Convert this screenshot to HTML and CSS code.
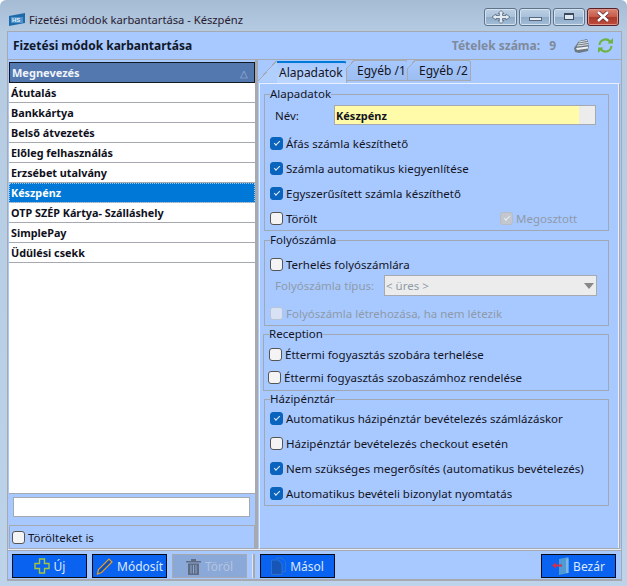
FILE: index.html
```html
<!DOCTYPE html>
<html lang="hu">
<head>
  <meta charset="UTF-8">
  <title>Fizetési módok karbantartása - Készpénz</title>
  <link rel="stylesheet" href="styles.css">
</head>
<body>
  <div class="window">
    <div class="titlebar">
      <svg class="app-icon" width="16" height="13" viewBox="0 0 16 13"><path d="M0 3 L16 0 V10 L0 13 Z" fill="#1f6aa8"/><rect x="2" y="4" width="12" height="6" fill="#4f93cc"/><text x="3" y="9" font-size="6" font-weight="bold" fill="#e6f0fa" font-family="Liberation Sans">HS</text></svg>
      <span class="title-text">Fizetési módok karbantartása - Készpénz</span>
      <div class="win-buttons">
        <div class="win-btn btn-move"><svg width="20" height="14" viewBox="0 0 20 14"><path d="M10 .5 L13 3.5 H11.5 V5.5 H15 V4 L19 7 L15 10 V8.5 H11.5 V10.5 H13 L10 13.5 L7 10.5 H8.500 V8.500 H5 V10 L1 7 L5 4 V5.500 H8.500 V3.500 H7 Z" fill="#e4ebf2" stroke="#56687e" stroke-width=".8"/></svg></div>
        <div class="win-btn btn-min"><span class="min-mark"></span></div>
        <div class="win-btn btn-max"><span class="max-mark"></span></div>
        <div class="win-btn btn-close"><svg width="16" height="11" viewBox="0 0 16 11"><path d="M3 1 L13 10 M13 1 L3 10" stroke="#5a2830" stroke-width="4"/><path d="M3 1 L13 10 M13 1 L3 10" stroke="#fff" stroke-width="2.6"/></svg></div>
      </div>
    </div>
    <div class="client">
      <div class="header">
        <span class="header-title">Fizetési módok karbantartása</span>
        <span class="item-count">Tételek száma:</span>
        <span class="item-count count-value">9</span>
        <svg class="print-icon" width="17" height="14" viewBox="0 0 17 14"><path d="M1 9 L6 2 L14 0 L16 6 L15 12 L6 14 L2 13 Z" fill="#6d7a84"/><path d="M6 3 L14 1.500 M5 5 L15 3.500 M4 7 L15.500 5.500" stroke="#dfe4e8"/><path d="M3 9 L15 7.500 V9.500 L4 11 Z" fill="#eef1f3"/></svg>
        <svg class="sync-icon" width="17" height="17" viewBox="0 0 17 17"><path d="M2.500 8 A6 6 0 0 1 13 4.500 M14.500 9 A6 6 0 0 1 4 12.500" fill="none" stroke="#6cb33f" stroke-width="2"/><path d="M10.500 6.500 H16 V1 Z M6.500 10.500 H1 V16 Z" fill="#6cb33f"/></svg>
      </div>
      <div class="main">
        <div class="left-panel">
          <div class="list">
            <div class="list-head"><span>Megnevezés</span><span class="sort-mark">△</span></div>
            <div class="list-row">Átutalás</div>
            <div class="list-row">Bankkártya</div>
            <div class="list-row">Belső átvezetés</div>
            <div class="list-row">Előleg felhasználás</div>
            <div class="list-row">Erzsébet utalvány</div>
            <div class="list-row selected">Készpénz</div>
            <div class="list-row">OTP SZÉP Kártya- Szálláshely</div>
            <div class="list-row">SimplePay</div>
            <div class="list-row">Üdülési csekk</div>
          </div>
          <div class="search-row"><div class="search-box"></div></div>
          <div class="deleted-row">
            <label class="check"><span class="box"></span>Törölteket is</label>
          </div>
        </div>
        <div class="right-panel">
          <div class="tabs">
            <div class="tab active">Alapadatok</div>
            <div class="tab tab-second">Egyéb /1</div>
            <div class="tab tab-third">Egyéb /2</div>
          </div>
          <div class="tab-body">
            <fieldset class="group group-base">
              <legend>Alapadatok</legend>
              <div class="name-row">
                <span class="name-label">Név:</span>
                <div class="name-input"><span>Készpénz</span><span class="name-btn"></span></div>
              </div>
              <label class="check row"><span class="box on"></span>Áfás számla készíthető</label>
              <label class="check row"><span class="box on"></span>Számla automatikus kiegyenlítése</label>
              <label class="check row"><span class="box on"></span>Egyszerűsített számla készíthető</label>
              <div class="split-row">
                <label class="check deleted-check"><span class="box"></span>Törölt</label>
                <label class="check muted"><span class="box grey-on"></span>Megosztott</label>
              </div>
            </fieldset>
            <fieldset class="group group-account">
              <legend>Folyószámla</legend>
              <label class="check row"><span class="box"></span>Terhelés folyószámlára</label>
              <div class="type-row">
                <span class="muted type-label">Folyószámla típus:</span>
                <div class="select"><span>&lt; üres &gt;</span><span class="arrow"></span></div>
              </div>
              <label class="check row muted"><span class="box faded"></span>Folyószámla létrehozása, ha nem létezik</label>
            </fieldset>
            <fieldset class="group group-reception">
              <legend>Reception</legend>
              <label class="check row"><span class="box"></span>Éttermi fogyasztás szobára terhelése</label>
              <label class="check row shifted"><span class="box"></span>Éttermi fogyasztás szobaszámhoz rendelése</label>
            </fieldset>
            <fieldset class="group group-cash">
              <legend>Házipénztár</legend>
              <label class="check row"><span class="box on"></span>Automatikus házipénztár bevételezés számlázáskor</label>
              <label class="check row"><span class="box"></span>Házipénztár bevételezés checkout esetén</label>
              <label class="check row"><span class="box on"></span>Nem szükséges megerősítés (automatikus bevételezés)</label>
              <label class="check row"><span class="box on"></span>Automatikus bevételi bizonylat nyomtatás</label>
            </fieldset>
          </div>
        </div>
      </div>
      <div class="footer">
        <button class="btn">
          <svg width="16" height="16" viewBox="0 0 16 16"><path d="M5.500 1 H10.500 V5.500 H15 V10.500 H10.500 V15 H5.500 V10.500 H1 V5.500 H5.500 Z" fill="none" stroke="#a4c63c" stroke-width="1.400"/></svg>Új
        </button>
        <button class="btn">
          <svg width="17" height="17" viewBox="0 0 17 17"><path d="M1.500 16 L2.500 11.500 L13 1 L16 4 L5.500 14.500 Z" fill="#0a4fc0" stroke="#e8a020" stroke-width="1.200"/></svg>Módosít
        </button>
        <button class="btn disabled">
          <svg width="15" height="17" viewBox="0 0 15 17"><path d="M0 3 H15 V4.500 H0 Z M5 1 H10 V3 H5 Z M2 5.500 H13 V17 H2 Z" fill="#5f6b80"/><path d="M5 7 V15.500 M7.500 7 V15.500 M10 7 V15.500" stroke="#8aa8d8" stroke-width="1"/></svg>Töröl
        </button>
        <span class="sep"></span>
        <button class="btn">
          <svg width="15" height="18" viewBox="0 0 15 18"><path d="M5 1 H11 L14.500 4.500 V14.500 H11.500" fill="none" stroke="#2b72cf"/><path d="M.5 3 H7 L11 7 V17.500 H.5 Z" fill="#1656b8" stroke="#2b72cf"/></svg>Másol
        </button>
        <button class="btn btn-leave">
          <svg width="17" height="18" viewBox="0 0 17 18"><path d="M7 2 L16.500 0 V16 L7 18 Z" fill="#4f9ad4"/><path d="M14 1.500 H16.500 V16 H14 Z" fill="#7db8e4"/><path d="M3 8.500 H10" stroke="#d0304a" stroke-width="2"/><path d="M0 8.500 L4 5.500 V11.500 Z" fill="#d0304a"/></svg>Bezár
        </button>
      </div>
    </div>
  </div>
</body>
</html>
```

FILE: styles.css
```css
/* Ablak */
html, body {
  margin: 0;
  height: 586px;
  overflow: hidden;
  background: #fff;
}

body {
  font-family: "Noto Sans", "Open Sans", sans-serif;
  font-size: 11.5px;
  color: #14141e;
}

.window {
  width: 627px;
  height: 586px;
  box-sizing: border-box;
  padding: 0 5px 5px 7px;
  background: linear-gradient(to bottom, #a4bbd4 0, #b4cbe2 31px, #bdd3e9 100%);
  border-radius: 6px 6px 0 0;
  display: flex;
  flex-direction: column;
}

.titlebar {
  height: 31px;
  flex: none;
  display: flex;
  align-items: center;
  padding: 7px 0 0 2px;
  box-sizing: border-box;
}

.app-icon {
  margin-right: 4px;
}

.title-text {
  font-size: 11.2px;
  color: #2a1a30;
}

.win-buttons {
  margin-left: auto;
  display: flex;
  gap: 2px;
  margin-right: 3px;
  margin-top: -5px;
}

.win-btn {
  height: 16px;
  border: 1px solid #5d7389;
  border-radius: 3px;
  box-shadow: inset 0 0 0 1px #d4e2ef;
  background: linear-gradient(to bottom, #bcd0e4, #a8c1da 50%, #8eabc8 52%, #a4bed8);
  display: flex;
  align-items: center;
  justify-content: center;
}

.btn-move { width: 31px; }
.btn-min { width: 30px; }
.btn-max { width: 30px; }
.btn-close {
  width: 30px;
  border-color: #5a2028;
  box-shadow: inset 0 0 0 1px #dc9488;
  background: linear-gradient(to bottom, #d98474, #c65a48 50%, #a93a2a 52%, #c04c3c);
}

.min-mark {
  width: 11px;
  height: 2px;
  background: #e8eef5;
  border: 1px solid #56687e;
  margin-top: 4px;
}

.max-mark {
  width: 8px;
  height: 4px;
  border: 1px solid #3c4a5c;
  border-top-width: 2px;
  background: #dde8f2;
}

.client {
  flex: 1;
  background: #a8c9ff;
  border: 1px solid #a6aab0;
  border-bottom-width: 2px;
  display: flex;
  flex-direction: column;
  min-height: 0;
}

/* Fejléc */
.header {
  height: 27px;
  flex: none;
  display: flex;
  align-items: center;
  padding: 0 7px 0 5px;
  border-bottom: 1px solid #a6aab0;
}

.header-title {
  font-weight: bold;
  font-size: 12px;
  margin-right: auto;
  color: #101828;
}

.item-count {
  font-weight: bold;
  font-size: 12px;
  color: #7f8a9c;
}

.count-value {
  margin-left: 9px;
}

.print-icon {
  margin-left: 17px;
}

.sync-icon {
  margin-left: 7px;
}

/* Lista */
.main {
  flex: 1;
  display: flex;
  min-height: 0;
  gap: 1px;
}

.left-panel {
  width: 247px;
  flex: none;
  display: flex;
  flex-direction: column;
  padding-top: 2px;
  border-right: 3px solid #a6aab0;
}

.list {
  flex: 1;
  background: #fff;
  border-bottom: 1px solid #a6aab0;
  margin-left: 1px;
}

.list-head {
  height: 19px;
  background: #5378b0;
  border: 1px solid #101820;
  color: #f0f4fa;
  font-weight: bold;
  font-size: 11px;
  padding: 0 6px 0 2px;
  display: flex;
  justify-content: space-between;
  align-items: center;
}

.sort-mark {
  color: #a0b4d0;
  font-weight: normal;
  font-size: 10px;
}

.list-row {
  height: 19px;
  line-height: 19px;
  border-bottom: 1px solid #a6aab0;
  padding-left: 2px;
  font-weight: bold;
  font-size: 10.8px;
  color: #101020;
}

.list-row.selected {
  background: #0078d7;
  color: #fff;
  outline: 1px dotted #9cc8ee;
  outline-offset: -1px;
}

.search-row {
  height: 31px;
  padding: 3px 5px 0;
  box-sizing: border-box;
  flex: none;
}

.search-box {
  height: 18px;
  background: #fff;
  border: 1px solid #a6aab0;
}

.deleted-row {
  height: 22px;
  flex: none;
  border: 1px solid #a6aab0;
  display: flex;
  align-items: center;
  padding-left: 2px;
  margin: 0 0 0 1px;
}

/* Fülek */
.right-panel {
  flex: 1;
  display: flex;
  flex-direction: column;
  min-width: 0;
}

.tabs {
  height: 23px;
  flex: none;
  display: flex;
  align-items: flex-end;
  padding-left: 18px;
  font-size: 12px;
}

.tab {
  position: relative;
  height: 21px;
  line-height: 20px;
  margin-bottom: 2px;
  box-sizing: border-box;
  border: 1px solid #a6aab0;
  border-radius: 0 3px 0 0;
}

.tab::before {
  content: "";
  position: absolute;
  left: -1px;
  top: -1px;
  width: 9px;
  height: 10px;
  background: linear-gradient(to bottom right, #a8c9ff calc(50% - 1px), #a6aab0 calc(50% - 1px), #a6aab0 50%, transparent 50%);
}

.tab-second {
  width: 61px;
  padding-left: 10px;
  border-left: none;
  background: linear-gradient(to bottom, #a8c9ff, #9cbdf0);
}

.tab-third {
  width: 63px;
  padding-left: 11px;
  border-left: none;
  background: linear-gradient(to bottom, #a8c9ff, #9cbdf0);
}

.tab.active {
  width: 70px;
  height: 22px;
  margin-bottom: 0;
  padding-left: 2px;
  border: none;
  border-top: 2px solid #0078d7;
  border-right: 1px solid #a6aab0;
  background: linear-gradient(to bottom, #a8c9ff, #bcd6ff);
}

.tab.active::before {
  left: -19px;
  top: -2px;
  width: 19px;
  height: 21px;
  background: linear-gradient(to bottom right, transparent calc(50% - 1px), #a6aab0 calc(50% - 1px), #a6aab0 50%, #b0cffd 50%);
}

.tab-body {
  flex: 1;
  border: 1px solid #e8f0fc;
  border-right-color: #a6aab0;
  border-bottom-color: #a6aab0;
  box-shadow: inset -1px 0 0 #e8f0fc;
  padding: 3px 10px 0 4px;
  margin-right: 1px;
  display: flex;
  flex-direction: column;
}

.group {
  margin: 0;
  padding: 0 0 0 5px;
  border: 1px solid #a0a8b4;
  min-width: 0;
  box-sizing: border-box;
}

.group legend {
  padding: 0;
  line-height: 14px;
}

.group-base { height: 144px; }
.group-account { height: 93px; margin-top: 2px; }
.group-reception { height: 64px; margin: 1px 0 0 -1px; }
.group-cash { height: 114px; margin-top: 1px; }

.check {
  display: flex;
  align-items: center;
  gap: 3px;
}

.check.row {
  height: 25px;
}

.group-account .check.row { height: 22px; }
.group-account .check.row:first-of-type { margin-top: 6px; }
.group-account .type-row + .check.row { margin-top: 6px; }
.group-reception .check.row { height: 23px; }
.group-reception .check.row:first-of-type { margin-top: 2px; }
.check.shifted { margin-left: -1px; }

.box {
  width: 11px;
  height: 11px;
  flex: none;
  background: #f4f4f4;
  border: 1px solid #555;
  border-radius: 3px;
  display: flex;
  align-items: center;
  justify-content: center;
}

.box.on {
  background: #0a63bd;
  border-color: #0a63bd;
}

.box.on::after,
.box.grey-on::after {
  content: "";
  width: 5px;
  height: 2px;
  border-left: 1px solid #e8f2ff;
  border-bottom: 1px solid #e8f2ff;
  transform: rotate(-45deg);
  margin-top: -2px;
}

.box.grey-on {
  background: #c4c8ce;
  border-color: #b8bcc4;
}

.box.faded {
  background: #d8e2f4;
  border-color: #b8c4d8;
}

.muted {
  color: #8e9aa8;
}

.name-row {
  display: flex;
  align-items: center;
  height: 24px;
  margin: 2px 0 4px;
}

.name-label {
  width: 64px;
  padding-left: 5px;
  box-sizing: border-box;
}

.name-input {
  width: 262px;
  height: 20px;
  box-sizing: border-box;
  background: #fffba8;
  border: 1px solid #a6aab0;
  font-weight: bold;
  font-size: 11px;
  display: flex;
  justify-content: space-between;
  align-items: center;
  padding-left: 1px;
}

.name-btn {
  width: 16px;
  height: 18px;
  background: #ececec;
}

.split-row {
  display: flex;
  height: 25px;
  align-items: center;
}

.deleted-check {
  width: 230px;
  flex: none;
}

.type-row {
  display: flex;
  align-items: center;
  height: 21px;
}

.type-label {
  width: 114px;
  padding-left: 5px;
  box-sizing: border-box;
}

.select {
  width: 213px;
  height: 21px;
  box-sizing: border-box;
  background: #ececec;
  border: 1px solid #a6aab0;
  color: #8e9aa8;
  display: flex;
  justify-content: space-between;
  align-items: center;
  padding: 0 2px 0 1px;
}

.arrow {
  width: 0;
  height: 0;
  border: 5px solid transparent;
  border-top: 6px solid #888;
  border-bottom: none;
}

/* Alsó gombsor */
.footer {
  height: 29px;
  flex: none;
  border-top: 1px solid #a6aab0;
  box-shadow: 0 -1px 0 #e8eef8;
  margin-top: 1px;
  padding: 3px 5px 0 4px;
  display: flex;
  align-items: flex-start;
  gap: 5px;
  box-sizing: border-box;
  font-size: 12px;
}

.btn {
  width: 75px;
  height: 24px;
  background: #0a62f0;
  border: 1px solid #0a0a14;
  color: #dde9ff;
  font: inherit;
  display: flex;
  align-items: center;
  justify-content: center;
  gap: 4px;
  padding: 0;
}

.btn.disabled {
  background: #8aa8d8;
  border-color: #a6aab0;
  color: #b4c4e0;
}

.btn-leave {
  margin-left: auto;
}

.sep {
  width: 1px;
  height: 24px;
  background: #e0e6ee;
  border-right: 2px solid #a6aab0;
}
```
